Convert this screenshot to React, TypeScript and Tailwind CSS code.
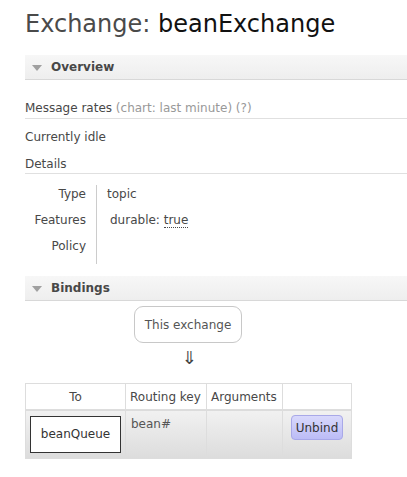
import React from 'react';

const SECTION_BAR =
  'flex items-center h-[25px] bg-gradient-to-b from-[#f7f7f7] to-[#eeeeee] border-b border-[#d8d8d8] pl-[7px] text-[12px] font-bold text-[#484848]';

function SectionHeader({ title }: { title: string }) {
  return (
    <div className={SECTION_BAR}>
      <span className="inline-block w-0 h-0 border-l-[5px] border-r-[5px] border-t-[6px] border-l-transparent border-r-transparent border-t-[#a0a0a0] mr-[9px] mt-[1px]" />
      {title}
    </div>
  );
}

export default function App() {
  return (
    <div className="bg-white w-[407px] h-[477px] overflow-hidden pl-[25px] font-['DejaVu_Sans',Verdana,sans-serif] text-[12px] text-[#484848]">
      <h1 className="mt-[10px] mb-[17px] text-[24px] leading-[28px] font-normal whitespace-nowrap">
        <span className="text-[#4a4a4a]">Exchange: </span>
        <span className="text-[#111]">beanExchange</span>
      </h1>

      {/* Overview */}
      <SectionHeader title="Overview" />
      <div className="pt-[20px] pb-[2px] leading-[16px] border-b border-[#e0e0e0] whitespace-nowrap">
        Message rates <span className="text-[#999]">(chart: last minute) (?)</span>
      </div>
      <div className="pt-[10px] leading-[16px]">Currently idle</div>
      <div className="pt-[11px] pb-[1px] leading-[16px] border-b border-[#e0e0e0]">Details</div>

      <div className="flex mt-[11px]">
        <div className="w-[72px] pr-[10px] text-right border-r border-[#ccc] leading-[18px]">
          <div className="h-[26px]">Type</div>
          <div className="h-[26px]">Features</div>
          <div className="h-[27px]">Policy</div>
        </div>
        <div className="pl-[10px] leading-[18px]">
          <div className="h-[26px]">topic</div>
          <div className="h-[26px] pl-[3px]">
            durable: <abbr className="no-underline border-b border-dotted border-[#484848]">true</abbr>
          </div>
        </div>
      </div>

      {/* Bindings */}
      <div className="mt-[12px]">
        <SectionHeader title="Bindings" />
      </div>

      <div className="w-[326px] flex flex-col items-center">
        <div className="mt-[5px] w-[108px] h-[37px] border border-[#c8c8c8] rounded-[9px] flex items-center justify-center text-[#555]">
          This exchange
        </div>
        <div className="mt-[3px] text-[18px] leading-[24px] text-[#444] pl-[2px]">⇓</div>
      </div>

      <table className="mt-[13px] border-collapse border border-[#dddddd] text-[12px]">
        <thead>
          <tr className="h-[26px] bg-white">
            <th className="w-[100px] font-normal text-center border-r border-[#dddddd] px-[5px]">To</th>
            <th className="w-[81px] font-normal text-left border-r border-[#dddddd] px-[4px] whitespace-nowrap">
              Routing key
            </th>
            <th className="w-[76px] font-normal text-left border-r border-[#dddddd] px-[4px]">Arguments</th>
            <th className="w-[69px]"></th>
          </tr>
        </thead>
        <tbody>
          <tr className="h-[49px] bg-gradient-to-b from-[#f1f1f1] to-[#dcdcdc] border-t border-[#dddddd]">
            <td className="border-r border-[#dddddd] px-[4px] align-middle">
              <div className="w-[91px] h-[37px] bg-white border border-[#333] flex items-center justify-center text-[#333]">
                beanQueue
              </div>
            </td>
            <td className="border-r border-[#dddddd] px-[5px] align-top pt-[5px] text-[#555]">bean#</td>
            <td className="border-r border-[#dddddd]"></td>
            <td className="align-top pt-[5px] pl-[8px]">
              <button className="w-[52px] h-[25px] rounded-[4px] border border-[#a8a8e8] bg-gradient-to-b from-[#d8d8fc] to-[#bcbcf6] text-[#333] text-[12px] leading-[20px]">
                Unbind
              </button>
            </td>
          </tr>
        </tbody>
      </table>
    </div>
  );
}
